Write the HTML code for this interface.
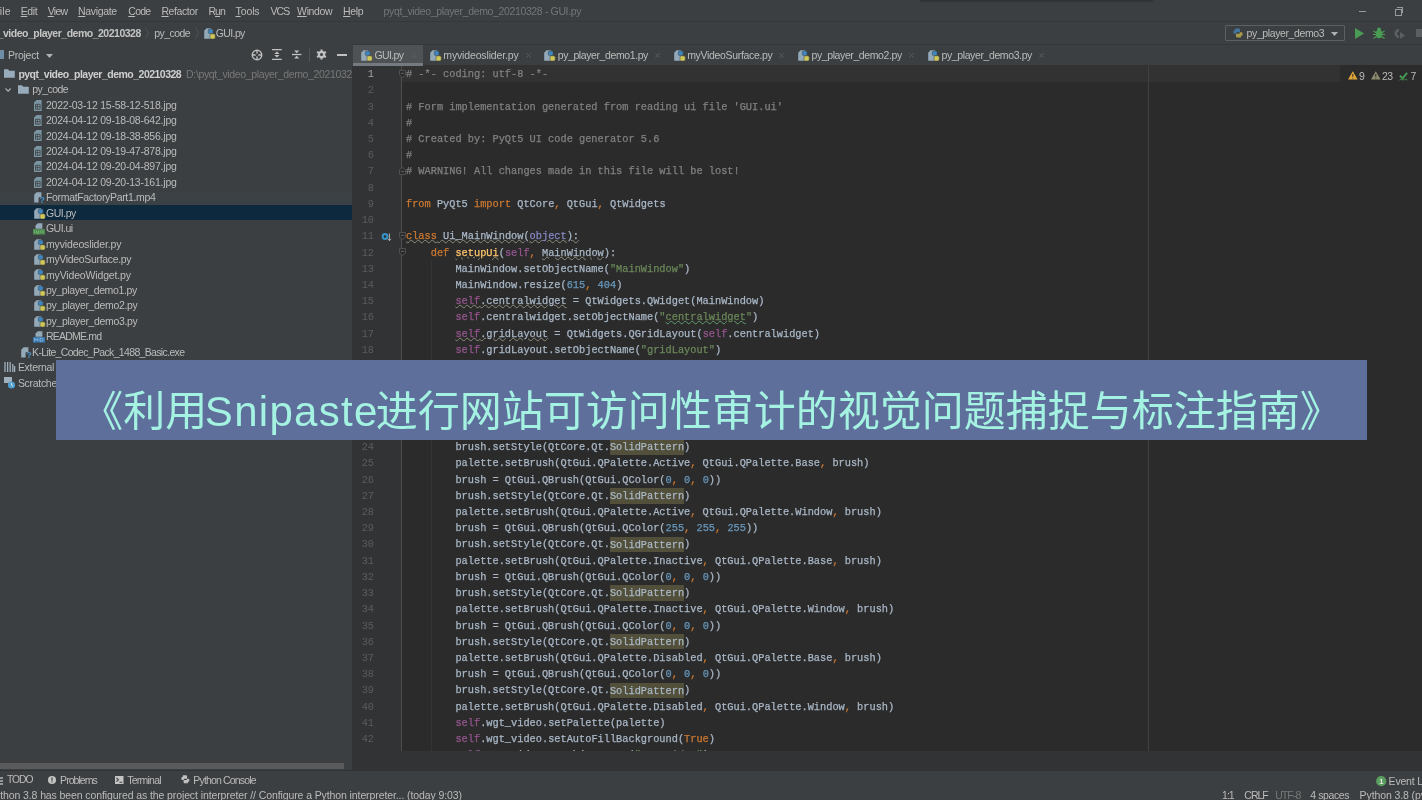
<!DOCTYPE html>
<html lang="zh"><head><meta charset="utf-8"><title>pyqt_video_player_demo_20210328 - GUI.py</title>
<style>
html,body{margin:0;padding:0}
body{width:1422px;height:800px;overflow:hidden;position:relative;background:#3c3f41;
 font-family:"Liberation Sans","Noto Sans CJK SC",sans-serif;font-size:10.5px;color:#bbbbbb}
#app{position:absolute;left:0;top:0;width:1422px;height:800px;will-change:transform}
.abs{position:absolute}
.t{position:absolute;white-space:pre;line-height:14px;height:14px}
#menubar{left:0;top:0;width:1422px;height:22px;background:#3c3f41}
#navbar{left:0;top:22px;width:1422px;height:22px;background:#3c3f41}
#left{left:0;top:44px;width:352px;height:726px;background:#3c3f41;overflow:hidden}
#tabs{left:352.5px;top:44px;width:1069.5px;height:21px;background:#3c3f41;border-top:1px solid #35373a;box-sizing:border-box;z-index:2}
#editor{left:353px;top:65px;width:1069px;height:686px;background:#2b2b2b;overflow:hidden}
#gutter{left:0;top:0;width:49px;height:686px;background:#313335;border-right:1px solid #4e4e4e;box-sizing:border-box}
#crumbs{left:353px;top:751px;width:1069px;height:19px;background:#313335}
#toolbar{left:0;top:770px;width:1422px;height:18px;background:#3c3f41;border-top:1px solid #323232;box-sizing:border-box}
#status{left:0;top:788px;width:1422px;height:12px;background:#3c3f41}
.code{position:absolute;left:53.0px;white-space:pre;font-family:"Liberation Mono",monospace;font-size:10.300px;
 line-height:16.22px;height:16.22px;color:#a9b7c6;-webkit-text-stroke:0.25px}
.ln{position:absolute;left:0;width:21px;text-align:right;font-family:"Liberation Mono",monospace;font-size:10.300px;
 line-height:16.22px;height:16.22px;color:#5a5d60}
.c{color:#808080} .k{color:#cc7832} .s{color:#6a8759} .n{color:#6897bb} .sf{color:#94558d}
.f{color:#ffc66d} .b{color:#8888c6} .hl{background:#52503a;padding:1.9px 0 1.7px}
.u{text-decoration:underline wavy #8d8d7a;text-decoration-thickness:0.5px;text-underline-offset:0.3px}
.ug{text-decoration:underline wavy #659c6b;text-decoration-thickness:0.5px;text-underline-offset:0.3px}
.row{position:absolute;left:0;width:352px;height:15.45px}
.m{text-decoration:underline;text-decoration-thickness:0.7px;text-underline-offset:1px}
#banner{left:56px;top:360px;width:1311px;height:79.5px;background:#5f6f9b}
#btext{position:absolute;left:0;top:11.5px;width:1311px;height:80px;line-height:80px;text-align:center;white-space:nowrap;
 font-family:"Liberation Sans","Noto Sans CJK SC",sans-serif;font-size:42px;color:#a4f2e1;letter-spacing:0}
#btext span{letter-spacing:1.3px;margin-left:-2.5px;margin-right:-3.1px}
svg{position:absolute;overflow:visible}
</style></head>
<body>
<div id="app">
<div id="menubar" class="abs"><span class="t" style="left:-6.9px;top:4.2px;font-size:10.5px;letter-spacing:0.19px;"><span class="m">F</span>ile</span><span class="t" style="left:20.7px;top:4.2px;font-size:10.5px;letter-spacing:-0.40px;"><span class="m">E</span>dit</span><span class="t" style="left:47.7px;top:4.2px;font-size:10.5px;letter-spacing:-0.69px;"><span class="m">V</span>iew</span><span class="t" style="left:78.1px;top:4.2px;font-size:10.5px;letter-spacing:-0.35px;"><span class="m">N</span>avigate</span><span class="t" style="left:128.3px;top:4.2px;font-size:10.5px;letter-spacing:-0.77px;"><span class="m">C</span>ode</span><span class="t" style="left:161.4px;top:4.2px;font-size:10.5px;letter-spacing:-0.40px;"><span class="m">R</span>efactor</span><span class="t" style="left:208.5px;top:4.2px;font-size:10.5px;letter-spacing:-1.00px;">R<span class="m">u</span>n</span><span class="t" style="left:235.5px;top:4.2px;font-size:10.5px;letter-spacing:-0.10px;"><span class="m">T</span>ools</span><span class="t" style="left:270.6px;top:4.2px;font-size:10.5px;letter-spacing:-1.00px;">VCS</span><span class="t" style="left:297.1px;top:4.2px;font-size:10.5px;letter-spacing:-0.37px;"><span class="m">W</span>indow</span><span class="t" style="left:343.1px;top:4.2px;font-size:10.5px;letter-spacing:-0.37px;"><span class="m">H</span>elp</span><span class="t" style="left:383.6px;top:4.2px;font-size:10.5px;color:#747678;letter-spacing:-0.36px;">pyqt_video_player_demo_20210328 - GUI.py</span><div class="abs" style="left:1359px;top:11px;width:7px;height:1px;background:#9a9a9a"></div><div class="abs" style="left:1395px;top:9px;width:5px;height:5px;border:1px solid #9a9a9a;box-sizing:content-box"></div><div class="abs" style="left:1397px;top:7px;width:5px;height:5px;border-top:1px solid #9a9a9a;border-right:1px solid #9a9a9a"></div><div class="abs" style="left:920px;top:0;width:233px;height:2.5px;background:linear-gradient(#2d2f31,#3c3f41);border-radius:0 0 2px 2px"></div></div>
<div id="navbar" class="abs"><div class="abs" style="left:0;top:-1px;width:1422px;height:1px;background:#35383a"></div><span class="t" style="left:-22.6px;top:3.9px;font-size:10.5px;color:#c4c4c4;font-weight:bold;letter-spacing:-0.49px;">pyqt_video_player_demo_20210328</span><svg style="left:145px;top:5px" width="4" height="12"><path d="M0.5 0.5l3 5.5-3 5.5" stroke="#505355" stroke-width="1" fill="none"/></svg><span class="t" style="left:154.2px;top:3.9px;font-size:10.5px;letter-spacing:-0.55px;">py_code</span><svg style="left:195px;top:5px" width="4" height="12"><path d="M0.5 0.5l3 5.5-3 5.5" stroke="#505355" stroke-width="1" fill="none"/></svg><svg style="left:203.5px;top:5.5px" width="12" height="12"><path d="M0.2 2.7L2.6 0.3H7.2V10.8H0.2z" fill="#93a9b8"/><rect x="4.3" y="1" width="4.8" height="4.6" rx="1.3" fill="#3d86c0" stroke="#3c3f41" stroke-width="0.5"/><rect x="6" y="5.8" width="5.2" height="5.2" rx="1.5" fill="#cfc75a" stroke="#3c3f41" stroke-width="0.5"/></svg><span class="t" style="left:215.8px;top:3.9px;font-size:10.5px;letter-spacing:-0.62px;">GUI.py</span><div class="abs" style="left:1225px;top:3px;width:120px;height:16px;border:1px solid #5e6060;box-sizing:border-box;border-radius:1px"></div><svg style="left:1232.5px;top:6px" width="10" height="10"><path d="M2.6 0.4h3q1.4 0 1.4 1.4v2.4H4.2q-1 0-1 1v0.6H1.6q-1.2 0-1.2-1.3V3.4q0-1.2 1.2-1.2h0.4V1.4q0-1 0.6-1z" fill="#42749b"/><path d="M7.4 9.6h-3q-1.4 0-1.4-1.4V5.8h2.8q1 0 1-1V4.2h1.6q1.2 0 1.2 1.3v1.1q0 1.2-1.2 1.2H8v0.8q0 1-0.6 1z" fill="#a89a4a"/></svg><span class="t" style="left:1246.6px;top:3.9px;font-size:10.5px;letter-spacing:-0.39px;">py_player_demo3</span><svg style="left:1331px;top:10px" width="8" height="5"><path d="M0 0h7l-3.5 4z" fill="#b0b0b0"/></svg><svg style="left:1355px;top:6px" width="9" height="11"><path d="M0 0l9 5.5-9 5.5z" fill="#499c54"/></svg><svg style="left:1373px;top:5px" width="12" height="12"><ellipse cx="6" cy="7" rx="3.2" ry="4.2" fill="#499c54"/><circle cx="6" cy="2.5" r="2" fill="#499c54"/><path d="M0.5 4l3 2M11.5 4l-3 2M0 7.5h3M12 7.5H9M0.5 11.5l3-2M11.5 11.5l-3-2" stroke="#499c54" stroke-width="1.2" fill="none"/></svg><svg style="left:1394px;top:6px" width="11" height="11"><path d="M5 1a4.5 4.5 0 1 0 0 9V7.5a2 2 0 1 1 0-4z" fill="#5c5f61"/><path d="M6 4l5 3.5L6 11z" fill="#5c5f61"/></svg><div class="abs" style="left:1416px;top:7px;width:8px;height:8px;background:#5c5f61"></div></div>
<div id="left" class="abs"><div class="abs" style="left:0;top:6px;width:4px;height:9px;background:#6e8ea8"></div><span class="t" style="left:7.9px;top:3.9px;font-size:10.5px;letter-spacing:-0.25px;">Project</span><svg style="left:45.5px;top:9.5px" width="8" height="5"><path d="M0 0h7l-3.5 4z" fill="#afb1b3"/></svg><svg style="left:250.5px;top:4.7px" width="12" height="12"><circle cx="6" cy="6" r="4.7" fill="none" stroke="#c0c0c0" stroke-width="1.5"/><path d="M6 1.5v3.2M6 7.3v3.2M1.5 6h3.2M7.3 6h3.2" stroke="#c0c0c0" stroke-width="1.3"/></svg><svg style="left:271.6px;top:5.2px" width="10" height="11"><path d="M0 .6h9.8M0 10.4h9.8" stroke="#c0c0c0" stroke-width="1.2"/><path d="M4.9 2.4l2.6 2.5h-5.2zM4.9 8.6l2.6-2.5h-5.2z" fill="#c0c0c0"/></svg><svg style="left:291.9px;top:5.2px" width="10" height="11"><path d="M0 5.5h9.4" stroke="#c0c0c0" stroke-width="1.3"/><path d="M4.7 4.2l2.6-2.8h-5.2zM4.7 6.8l2.6 2.8h-5.2z" fill="#c0c0c0"/></svg><div class="abs" style="left:309px;top:4px;width:1px;height:14px;background:#4f5153"></div><svg style="left:316.4px;top:5.2px" width="11" height="11"><circle cx="5.5" cy="5.5" r="2.7" fill="none" stroke="#c0c0c0" stroke-width="2.2"/><path d="M5.5 0.4v10.2M1.08 2.95l8.84 5.1M9.92 2.95l-8.84 5.1" stroke="#c0c0c0" stroke-width="2.1"/><circle cx="5.5" cy="5.5" r="1.5" fill="#3c3f41"/></svg><div class="abs" style="left:337px;top:9.8px;width:10.2px;height:2.1px;background:#c0c0c0"></div><div class="row" style="top:21.85px;"><svg style="left:4.1px;top:3.5px" width="11" height="9"><path d="M0 0.2h4l1.3 1.5H10.8V8.8H0z" fill="#98abba"/></svg><span class="t" style="left:18.4px;top:0.9px;font-size:10.5px;color:#cfcfcf;font-weight:bold;letter-spacing:-0.51px;">pyqt_video_player_demo_20210328</span><span class="t" style="left:186.1px;top:0.9px;font-size:10.5px;color:#787878;letter-spacing:-0.35px;">D:\pyqt_video_player_demo_20210328</span></div><div class="row" style="top:37.30px;"><svg style="left:5.3px;top:6.3px" width="6" height="4"><path d="M0.5 0.5l2.6 2.7L5.7 0.5" stroke="#afb1b3" stroke-width="1.1" fill="none"/></svg><svg style="left:18.2px;top:3.6px" width="11" height="9"><path d="M0 0.2h4l1.3 1.5H10.8V8.8H0z" fill="#98abba"/></svg><span class="t" style="left:32.3px;top:0.9px;font-size:10.5px;letter-spacing:-0.57px;">py_code</span></div><div class="row" style="top:52.75px;"><svg style="left:33.5px;top:2.8px" width="8" height="11"><path d="M0 2.6L2.6 0H7.6v11H0z" fill="#7b96a3"/><path d="M1.5 4.3h4.6v4.9H1.5z" fill="none" stroke="#3c3f41" stroke-width="0.8"/><path d="M1.5 6.6h4.6M3.4 4.3v4.9" stroke="#3c3f41" stroke-width="0.7"/></svg><span class="t" style="left:46.0px;top:0.9px;font-size:10.5px;letter-spacing:-0.22px;">2022-03-12 15-58-12-518.jpg</span></div><div class="row" style="top:68.20px;"><svg style="left:33.5px;top:2.8px" width="8" height="11"><path d="M0 2.6L2.6 0H7.6v11H0z" fill="#7b96a3"/><path d="M1.5 4.3h4.6v4.9H1.5z" fill="none" stroke="#3c3f41" stroke-width="0.8"/><path d="M1.5 6.6h4.6M3.4 4.3v4.9" stroke="#3c3f41" stroke-width="0.7"/></svg><span class="t" style="left:46.0px;top:0.9px;font-size:10.5px;letter-spacing:-0.22px;">2024-04-12 09-18-08-642.jpg</span></div><div class="row" style="top:83.65px;"><svg style="left:33.5px;top:2.8px" width="8" height="11"><path d="M0 2.6L2.6 0H7.6v11H0z" fill="#7b96a3"/><path d="M1.5 4.3h4.6v4.9H1.5z" fill="none" stroke="#3c3f41" stroke-width="0.8"/><path d="M1.5 6.6h4.6M3.4 4.3v4.9" stroke="#3c3f41" stroke-width="0.7"/></svg><span class="t" style="left:46.0px;top:0.9px;font-size:10.5px;letter-spacing:-0.22px;">2024-04-12 09-18-38-856.jpg</span></div><div class="row" style="top:99.10px;"><svg style="left:33.5px;top:2.8px" width="8" height="11"><path d="M0 2.6L2.6 0H7.6v11H0z" fill="#7b96a3"/><path d="M1.5 4.3h4.6v4.9H1.5z" fill="none" stroke="#3c3f41" stroke-width="0.8"/><path d="M1.5 6.6h4.6M3.4 4.3v4.9" stroke="#3c3f41" stroke-width="0.7"/></svg><span class="t" style="left:46.0px;top:0.9px;font-size:10.5px;letter-spacing:-0.22px;">2024-04-12 09-19-47-878.jpg</span></div><div class="row" style="top:114.55px;"><svg style="left:33.5px;top:2.8px" width="8" height="11"><path d="M0 2.6L2.6 0H7.6v11H0z" fill="#7b96a3"/><path d="M1.5 4.3h4.6v4.9H1.5z" fill="none" stroke="#3c3f41" stroke-width="0.8"/><path d="M1.5 6.6h4.6M3.4 4.3v4.9" stroke="#3c3f41" stroke-width="0.7"/></svg><span class="t" style="left:46.0px;top:0.9px;font-size:10.5px;letter-spacing:-0.22px;">2024-04-12 09-20-04-897.jpg</span></div><div class="row" style="top:130.00px;"><svg style="left:33.5px;top:2.8px" width="8" height="11"><path d="M0 2.6L2.6 0H7.6v11H0z" fill="#7b96a3"/><path d="M1.5 4.3h4.6v4.9H1.5z" fill="none" stroke="#3c3f41" stroke-width="0.8"/><path d="M1.5 6.6h4.6M3.4 4.3v4.9" stroke="#3c3f41" stroke-width="0.7"/></svg><span class="t" style="left:46.0px;top:0.9px;font-size:10.5px;letter-spacing:-0.22px;">2024-04-12 09-20-13-161.jpg</span></div><div class="abs" style="left:0;top:148.4px;width:352px;height:12.4px;background:rgba(60,85,105,0.10)"></div><div class="row" style="top:145.45px;"><svg style="left:33.5px;top:2.8px" width="12" height="12"><path d="M0.2 2.7L2.6 0.3H7.4v5H4.6v5.2H0.2z" fill="#93a9b8"/><text x="5.6" y="11.4" font-family="Liberation Sans,sans-serif" font-size="8.5" font-weight="bold" fill="#4a96cf">?</text></svg><span class="t" style="left:46.0px;top:0.9px;font-size:10.5px;letter-spacing:-0.33px;">FormatFactoryPart1.mp4</span></div><div class="row" style="top:160.90px;background:#0d293e;"><svg style="left:33.5px;top:2.8px" width="12" height="12"><path d="M0.2 2.7L2.6 0.3H7.2V10.8H0.2z" fill="#93a9b8"/><rect x="4.3" y="1" width="4.8" height="4.6" rx="1.3" fill="#3d86c0" stroke="#3c3f41" stroke-width="0.5"/><rect x="6" y="5.8" width="5.2" height="5.2" rx="1.5" fill="#cfc75a" stroke="#3c3f41" stroke-width="0.5"/></svg><span class="t" style="left:46.0px;top:0.9px;font-size:10.5px;letter-spacing:-0.46px;">GUI.py</span></div><div class="row" style="top:176.35px;"><svg style="left:32.5px;top:2.8px" width="12" height="12"><path d="M2.5 2.6L4.8 0.3H9.4v5.4H2.5z" fill="#93a9b8"/><rect x="0" y="6" width="12" height="5.6" fill="#4d8a4d"/><path d="M1.6 7.4v2.8M3.6 7.4v2.8h2v-2.8M8 7.4v2.8M10 7.4v2.8" stroke="#7fb87f" stroke-width="0.8" fill="none"/></svg><span class="t" style="left:46.0px;top:0.9px;font-size:10.5px;letter-spacing:-0.55px;">GUI.ui</span></div><div class="row" style="top:191.80px;"><svg style="left:33.5px;top:2.8px" width="12" height="12"><path d="M0.2 2.7L2.6 0.3H7.2V10.8H0.2z" fill="#93a9b8"/><rect x="4.3" y="1" width="4.8" height="4.6" rx="1.3" fill="#3d86c0" stroke="#3c3f41" stroke-width="0.5"/><rect x="6" y="5.8" width="5.2" height="5.2" rx="1.5" fill="#cfc75a" stroke="#3c3f41" stroke-width="0.5"/></svg><span class="t" style="left:46.0px;top:0.9px;font-size:10.5px;letter-spacing:-0.14px;">myvideoslider.py</span></div><div class="row" style="top:207.25px;"><svg style="left:33.5px;top:2.8px" width="12" height="12"><path d="M0.2 2.7L2.6 0.3H7.2V10.8H0.2z" fill="#93a9b8"/><rect x="4.3" y="1" width="4.8" height="4.6" rx="1.3" fill="#3d86c0" stroke="#3c3f41" stroke-width="0.5"/><rect x="6" y="5.8" width="5.2" height="5.2" rx="1.5" fill="#cfc75a" stroke="#3c3f41" stroke-width="0.5"/></svg><span class="t" style="left:46.0px;top:0.9px;font-size:10.5px;letter-spacing:-0.33px;">myVideoSurface.py</span></div><div class="row" style="top:222.70px;"><svg style="left:33.5px;top:2.8px" width="12" height="12"><path d="M0.2 2.7L2.6 0.3H7.2V10.8H0.2z" fill="#93a9b8"/><rect x="4.3" y="1" width="4.8" height="4.6" rx="1.3" fill="#3d86c0" stroke="#3c3f41" stroke-width="0.5"/><rect x="6" y="5.8" width="5.2" height="5.2" rx="1.5" fill="#cfc75a" stroke="#3c3f41" stroke-width="0.5"/></svg><span class="t" style="left:46.0px;top:0.9px;font-size:10.5px;letter-spacing:-0.16px;">myVideoWidget.py</span></div><div class="row" style="top:238.15px;"><svg style="left:33.5px;top:2.8px" width="12" height="12"><path d="M0.2 2.7L2.6 0.3H7.2V10.8H0.2z" fill="#93a9b8"/><rect x="4.3" y="1" width="4.8" height="4.6" rx="1.3" fill="#3d86c0" stroke="#3c3f41" stroke-width="0.5"/><rect x="6" y="5.8" width="5.2" height="5.2" rx="1.5" fill="#cfc75a" stroke="#3c3f41" stroke-width="0.5"/></svg><span class="t" style="left:46.0px;top:0.9px;font-size:10.5px;letter-spacing:-0.37px;">py_player_demo1.py</span></div><div class="row" style="top:253.60px;"><svg style="left:33.5px;top:2.8px" width="12" height="12"><path d="M0.2 2.7L2.6 0.3H7.2V10.8H0.2z" fill="#93a9b8"/><rect x="4.3" y="1" width="4.8" height="4.6" rx="1.3" fill="#3d86c0" stroke="#3c3f41" stroke-width="0.5"/><rect x="6" y="5.8" width="5.2" height="5.2" rx="1.5" fill="#cfc75a" stroke="#3c3f41" stroke-width="0.5"/></svg><span class="t" style="left:46.0px;top:0.9px;font-size:10.5px;letter-spacing:-0.33px;">py_player_demo2.py</span></div><div class="row" style="top:269.05px;"><svg style="left:33.5px;top:2.8px" width="12" height="12"><path d="M0.2 2.7L2.6 0.3H7.2V10.8H0.2z" fill="#93a9b8"/><rect x="4.3" y="1" width="4.8" height="4.6" rx="1.3" fill="#3d86c0" stroke="#3c3f41" stroke-width="0.5"/><rect x="6" y="5.8" width="5.2" height="5.2" rx="1.5" fill="#cfc75a" stroke="#3c3f41" stroke-width="0.5"/></svg><span class="t" style="left:46.0px;top:0.9px;font-size:10.5px;letter-spacing:-0.33px;">py_player_demo3.py</span></div><div class="row" style="top:284.50px;"><svg style="left:32.5px;top:2.8px" width="12" height="12"><path d="M2.5 2.6L4.8 0.3H9.4v5.4H2.5z" fill="#93a9b8"/><rect x="0" y="6" width="12" height="5.6" fill="#3b78ad"/><path d="M1.6 10.3V7.4l1.6 1.8 1.6-1.8v2.9M7 7.4v2.9h1.4q1.6 0 1.6-1.45T8.4 7.4z" stroke="#8fc0e8" stroke-width="0.8" fill="none"/></svg><span class="t" style="left:46.0px;top:0.9px;font-size:10.5px;letter-spacing:-0.79px;">README.md</span></div><div class="row" style="top:299.95px;"><svg style="left:20.5px;top:2.8px" width="12" height="12"><path d="M0.2 2.7L2.6 0.3H7.4v5H4.6v5.2H0.2z" fill="#93a9b8"/><text x="5.6" y="11.4" font-family="Liberation Sans,sans-serif" font-size="8.5" font-weight="bold" fill="#4a96cf">?</text></svg><span class="t" style="left:32.1px;top:0.9px;font-size:10.5px;letter-spacing:-0.66px;">K-Lite_Codec_Pack_1488_Basic.exe</span></div><div class="row" style="top:315.40px;"><svg style="left:4px;top:3px" width="11" height="10"><path d="M1 0v10M3.6 0v10M6.2 0v10M8.8 2v8M10.6 4v6" stroke="#9fb0bc" stroke-width="1.3"/></svg><span class="t" style="left:17.9px;top:0.9px;font-size:10.5px;letter-spacing:-0.3px;">External Libraries</span></div><div class="row" style="top:330.85px;"><svg style="left:4px;top:2px" width="12" height="12"><path d="M0 0h8v6H0z" fill="#9fb0bc"/><circle cx="7.5" cy="8" r="3.6" fill="#4f9fd0"/><path d="M7.5 6v2.2l1.6 1" stroke="#e8e8e8" stroke-width="0.9" fill="none"/></svg><span class="t" style="left:17.9px;top:0.9px;font-size:10.5px;letter-spacing:-0.3px;">Scratches and Consoles</span></div><div class="abs" style="left:0;top:719.2px;width:344px;height:6px;background:#595b5d"></div></div>
<div id="tabs" class="abs"><div class="abs" style="left:0;top:0;width:70.4px;height:20px;background:#4e5254"></div><div class="abs" style="left:0;top:18.4px;width:70.4px;height:2.4px;background:#747a80;z-index:3"></div><svg style="left:8.899999999999977px;top:4.5px" width="12" height="12"><path d="M0.2 2.7L2.6 0.3H7.2V10.8H0.2z" fill="#93a9b8"/><rect x="4.3" y="1" width="4.8" height="4.6" rx="1.3" fill="#3d86c0" stroke="#3c3f41" stroke-width="0.5"/><rect x="6" y="5.8" width="5.2" height="5.2" rx="1.5" fill="#cfc75a" stroke="#3c3f41" stroke-width="0.5"/></svg><span class="t" style="left:21.9px;top:3.0px;font-size:10.5px;letter-spacing:-0.62px;">GUI.py</span><svg style="left:58.8px;top:8px" width="5" height="5"><path d="M0.3 0.3l4.4 4.4M4.7 0.3l-4.4 4.4" stroke="#5c5f61" stroke-width="0.9"/></svg><svg style="left:77.19999999999999px;top:4.5px" width="12" height="12"><path d="M0.2 2.7L2.6 0.3H7.2V10.8H0.2z" fill="#93a9b8"/><rect x="4.3" y="1" width="4.8" height="4.6" rx="1.3" fill="#3d86c0" stroke="#3c3f41" stroke-width="0.5"/><rect x="6" y="5.8" width="5.2" height="5.2" rx="1.5" fill="#cfc75a" stroke="#3c3f41" stroke-width="0.5"/></svg><span class="t" style="left:90.8px;top:3.0px;font-size:10.5px;letter-spacing:-0.15px;">myvideoslider.py</span><svg style="left:173.5px;top:8px" width="5" height="5"><path d="M0.3 0.3l4.4 4.4M4.7 0.3l-4.4 4.4" stroke="#5c5f61" stroke-width="0.9"/></svg><svg style="left:191.89999999999998px;top:4.5px" width="12" height="12"><path d="M0.2 2.7L2.6 0.3H7.2V10.8H0.2z" fill="#93a9b8"/><rect x="4.3" y="1" width="4.8" height="4.6" rx="1.3" fill="#3d86c0" stroke="#3c3f41" stroke-width="0.5"/><rect x="6" y="5.8" width="5.2" height="5.2" rx="1.5" fill="#cfc75a" stroke="#3c3f41" stroke-width="0.5"/></svg><span class="t" style="left:205.2px;top:3.0px;font-size:10.5px;letter-spacing:-0.40px;">py_player_demo1.py</span><svg style="left:302.0px;top:8px" width="5" height="5"><path d="M0.3 0.3l4.4 4.4M4.7 0.3l-4.4 4.4" stroke="#5c5f61" stroke-width="0.9"/></svg><svg style="left:321.79999999999995px;top:4.5px" width="12" height="12"><path d="M0.2 2.7L2.6 0.3H7.2V10.8H0.2z" fill="#93a9b8"/><rect x="4.3" y="1" width="4.8" height="4.6" rx="1.3" fill="#3d86c0" stroke="#3c3f41" stroke-width="0.5"/><rect x="6" y="5.8" width="5.2" height="5.2" rx="1.5" fill="#cfc75a" stroke="#3c3f41" stroke-width="0.5"/></svg><span class="t" style="left:334.7px;top:3.0px;font-size:10.5px;letter-spacing:-0.33px;">myVideoSurface.py</span><svg style="left:426.5px;top:8px" width="5" height="5"><path d="M0.3 0.3l4.4 4.4M4.7 0.3l-4.4 4.4" stroke="#5c5f61" stroke-width="0.9"/></svg><svg style="left:445.29999999999995px;top:4.5px" width="12" height="12"><path d="M0.2 2.7L2.6 0.3H7.2V10.8H0.2z" fill="#93a9b8"/><rect x="4.3" y="1" width="4.8" height="4.6" rx="1.3" fill="#3d86c0" stroke="#3c3f41" stroke-width="0.5"/><rect x="6" y="5.8" width="5.2" height="5.2" rx="1.5" fill="#cfc75a" stroke="#3c3f41" stroke-width="0.5"/></svg><span class="t" style="left:459.0px;top:3.0px;font-size:10.5px;letter-spacing:-0.40px;">py_player_demo2.py</span><svg style="left:556.2px;top:8px" width="5" height="5"><path d="M0.3 0.3l4.4 4.4M4.7 0.3l-4.4 4.4" stroke="#5c5f61" stroke-width="0.9"/></svg><svg style="left:575.0px;top:4.5px" width="12" height="12"><path d="M0.2 2.7L2.6 0.3H7.2V10.8H0.2z" fill="#93a9b8"/><rect x="4.3" y="1" width="4.8" height="4.6" rx="1.3" fill="#3d86c0" stroke="#3c3f41" stroke-width="0.5"/><rect x="6" y="5.8" width="5.2" height="5.2" rx="1.5" fill="#cfc75a" stroke="#3c3f41" stroke-width="0.5"/></svg><span class="t" style="left:589.0px;top:3.0px;font-size:10.5px;letter-spacing:-0.39px;">py_player_demo3.py</span><svg style="left:686.2px;top:8px" width="5" height="5"><path d="M0.3 0.3l4.4 4.4M4.7 0.3l-4.4 4.4" stroke="#5c5f61" stroke-width="0.9"/></svg></div>
<div class="abs" style="left:352px;top:65.5px;width:1px;height:704px;background:#303234"></div><div id="editor" class="abs"><div class="abs" style="left:0;top:0;width:987px;height:16.6px;background:#323232"></div><div id="gutter" class="abs"></div><div class="abs" style="left:794.5px;top:0;width:1px;height:686px;background:#414141"></div><div class="abs" style="left:77.7px;top:195.0px;width:1px;height:491.4px;background:#343434"></div><div class="ln" style="top:1.10px;color:#a4a3a3">1</div><div class="code" style="top:1.10px"><span class="c"># -*- coding: utf-8 -*-</span></div>
<div class="ln" style="top:17.32px">2</div>
<div class="ln" style="top:33.54px">3</div><div class="code" style="top:33.54px"><span class="c"># Form implementation generated from reading ui file 'GUI.ui'</span></div>
<div class="ln" style="top:49.76px">4</div><div class="code" style="top:49.76px"><span class="c">#</span></div>
<div class="ln" style="top:65.98px">5</div><div class="code" style="top:65.98px"><span class="c"># Created by: PyQt5 UI code generator 5.6</span></div>
<div class="ln" style="top:82.20px">6</div><div class="code" style="top:82.20px"><span class="c">#</span></div>
<div class="ln" style="top:98.42px">7</div><div class="code" style="top:98.42px"><span class="c"># WARNING! All changes made in this file will be lost!</span></div>
<div class="ln" style="top:114.64px">8</div>
<div class="ln" style="top:130.86px">9</div><div class="code" style="top:130.86px"><span class="k">from</span> PyQt5 <span class="k">import</span> QtCore<span class="k">,</span> QtGui<span class="k">,</span> QtWidgets</div>
<div class="ln" style="top:147.08px">10</div>
<div class="ln" style="top:163.30px">11</div><div class="code" style="top:163.30px"><span class="k u">class</span><span class="u"> Ui_MainWindow(</span><span class="b u">object</span><span class="u">):</span></div>
<div class="ln" style="top:179.52px">12</div><div class="code" style="top:179.52px"><span class="k">    def </span><span class="f u">setupUi</span>(<span class="sf">self</span><span class="k">,</span> <span class="u">MainWindow</span>):</div>
<div class="ln" style="top:195.74px">13</div><div class="code" style="top:195.74px">        MainWindow.setObjectName(<span class="s">"MainWindow"</span>)</div>
<div class="ln" style="top:211.96px">14</div><div class="code" style="top:211.96px">        MainWindow.resize(<span class="n">615</span><span class="k">,</span> <span class="n">404</span>)</div>
<div class="ln" style="top:228.18px">15</div><div class="code" style="top:228.18px">        <span class="sf u">self</span><span class="u">.centralwidget</span> = QtWidgets.QWidget(MainWindow)</div>
<div class="ln" style="top:244.40px">16</div><div class="code" style="top:244.40px">        <span class="sf">self</span>.centralwidget.setObjectName(<span class="s">"</span><span class="s ug">centralwidget</span><span class="s">"</span>)</div>
<div class="ln" style="top:260.62px">17</div><div class="code" style="top:260.62px">        <span class="sf u">self</span><span class="u">.gridLayout</span> = QtWidgets.QGridLayout(<span class="sf">self</span>.centralwidget)</div>
<div class="ln" style="top:276.84px">18</div><div class="code" style="top:276.84px">        <span class="sf">self</span>.gridLayout.setObjectName(<span class="s">"gridLayout"</span>)</div>
<div class="ln" style="top:293.06px">19</div><div class="code" style="top:293.06px">        <span class="sf">self</span>.wgt_video = myVideoWidget(<span class="sf">self</span>.centralwidget)</div>
<div class="ln" style="top:309.28px">20</div><div class="code" style="top:309.28px">        <span class="sf">self</span>.wgt_video.setMinimumSize(QtCore.QSize(<span class="n">410</span><span class="k">,</span> <span class="n">200</span>))</div>
<div class="ln" style="top:325.50px">21</div><div class="code" style="top:325.50px">        palette = QtGui.QPalette()</div>
<div class="ln" style="top:341.72px">22</div><div class="code" style="top:341.72px">        brush = QtGui.QBrush(QtGui.QColor(<span class="n">255</span><span class="k">,</span> <span class="n">255</span><span class="k">,</span> <span class="n">255</span>))</div>
<div class="ln" style="top:357.94px">23</div><div class="code" style="top:357.94px">        brush.setStyle(QtCore.Qt.<span class="hl">SolidPattern</span>)</div>
<div class="ln" style="top:374.16px">24</div><div class="code" style="top:374.16px">        brush.setStyle(QtCore.Qt.<span class="hl">SolidPattern</span>)</div>
<div class="ln" style="top:390.38px">25</div><div class="code" style="top:390.38px">        palette.setBrush(QtGui.QPalette.Active<span class="k">,</span> QtGui.QPalette.Base<span class="k">,</span> brush)</div>
<div class="ln" style="top:406.60px">26</div><div class="code" style="top:406.60px">        brush = QtGui.QBrush(QtGui.QColor(<span class="n">0</span><span class="k">,</span> <span class="n">0</span><span class="k">,</span> <span class="n">0</span>))</div>
<div class="ln" style="top:422.82px">27</div><div class="code" style="top:422.82px">        brush.setStyle(QtCore.Qt.<span class="hl">SolidPattern</span>)</div>
<div class="ln" style="top:439.04px">28</div><div class="code" style="top:439.04px">        palette.setBrush(QtGui.QPalette.Active<span class="k">,</span> QtGui.QPalette.Window<span class="k">,</span> brush)</div>
<div class="ln" style="top:455.26px">29</div><div class="code" style="top:455.26px">        brush = QtGui.QBrush(QtGui.QColor(<span class="n">255</span><span class="k">,</span> <span class="n">255</span><span class="k">,</span> <span class="n">255</span>))</div>
<div class="ln" style="top:471.48px">30</div><div class="code" style="top:471.48px">        brush.setStyle(QtCore.Qt.<span class="hl">SolidPattern</span>)</div>
<div class="ln" style="top:487.70px">31</div><div class="code" style="top:487.70px">        palette.setBrush(QtGui.QPalette.Inactive<span class="k">,</span> QtGui.QPalette.Base<span class="k">,</span> brush)</div>
<div class="ln" style="top:503.92px">32</div><div class="code" style="top:503.92px">        brush = QtGui.QBrush(QtGui.QColor(<span class="n">0</span><span class="k">,</span> <span class="n">0</span><span class="k">,</span> <span class="n">0</span>))</div>
<div class="ln" style="top:520.14px">33</div><div class="code" style="top:520.14px">        brush.setStyle(QtCore.Qt.<span class="hl">SolidPattern</span>)</div>
<div class="ln" style="top:536.36px">34</div><div class="code" style="top:536.36px">        palette.setBrush(QtGui.QPalette.Inactive<span class="k">,</span> QtGui.QPalette.Window<span class="k">,</span> brush)</div>
<div class="ln" style="top:552.58px">35</div><div class="code" style="top:552.58px">        brush = QtGui.QBrush(QtGui.QColor(<span class="n">0</span><span class="k">,</span> <span class="n">0</span><span class="k">,</span> <span class="n">0</span>))</div>
<div class="ln" style="top:568.80px">36</div><div class="code" style="top:568.80px">        brush.setStyle(QtCore.Qt.<span class="hl">SolidPattern</span>)</div>
<div class="ln" style="top:585.02px">37</div><div class="code" style="top:585.02px">        palette.setBrush(QtGui.QPalette.Disabled<span class="k">,</span> QtGui.QPalette.Base<span class="k">,</span> brush)</div>
<div class="ln" style="top:601.24px">38</div><div class="code" style="top:601.24px">        brush = QtGui.QBrush(QtGui.QColor(<span class="n">0</span><span class="k">,</span> <span class="n">0</span><span class="k">,</span> <span class="n">0</span>))</div>
<div class="ln" style="top:617.46px">39</div><div class="code" style="top:617.46px">        brush.setStyle(QtCore.Qt.<span class="hl">SolidPattern</span>)</div>
<div class="ln" style="top:633.68px">40</div><div class="code" style="top:633.68px">        palette.setBrush(QtGui.QPalette.Disabled<span class="k">,</span> QtGui.QPalette.Window<span class="k">,</span> brush)</div>
<div class="ln" style="top:649.90px">41</div><div class="code" style="top:649.90px">        <span class="sf">self</span>.wgt_video.setPalette(palette)</div>
<div class="ln" style="top:666.12px">42</div><div class="code" style="top:666.12px">        <span class="sf">self</span>.wgt_video.setAutoFillBackground(<span class="k">True</span>)</div>
<div class="ln" style="top:682.34px">43</div><div class="code" style="top:682.34px">        <span class="sf">self</span>.wgt_video.setObjectName(<span class="s">"wgt_video"</span>)</div>
<svg style="left:45.5px;top:4.6px" width="7" height="8"><path d="M0.5 0.5h6v4.6l-3 2.4-3-2.4z" fill="#2b2b2b" stroke="#55585a" stroke-width="0.8"/><path d="M1.8 3.4h3.4" stroke="#6c6f71" stroke-width="0.8"/></svg><svg style="left:45.5px;top:101.9px" width="7" height="8"><path d="M0.5 7.5h6V2.9l-3-2.4-3 2.4z" fill="#2b2b2b" stroke="#55585a" stroke-width="0.8"/><path d="M1.8 4.6h3.4" stroke="#6c6f71" stroke-width="0.8"/></svg><svg style="left:45.5px;top:166.8px" width="7" height="8"><path d="M0.5 0.5h6v4.6l-3 2.4-3-2.4z" fill="#2b2b2b" stroke="#55585a" stroke-width="0.8"/><path d="M1.8 3.4h3.4" stroke="#6c6f71" stroke-width="0.8"/></svg><svg style="left:45.5px;top:183.0px" width="7" height="8"><path d="M0.5 0.5h6v4.6l-3 2.4-3-2.4z" fill="#2b2b2b" stroke="#55585a" stroke-width="0.8"/><path d="M1.8 3.4h3.4" stroke="#6c6f71" stroke-width="0.8"/></svg><svg style="left:28px;top:166.9px" width="10" height="10"><circle cx="4" cy="4.5" r="3.4" fill="#3592c4"/><circle cx="4" cy="4.5" r="1.3" fill="#2b2b2b"/><path d="M8.4 1.5v7M6.8 6.8l1.6 1.9 1.6-1.9" stroke="#afb1b3" stroke-width="1" fill="none"/></svg><svg style="left:994.6px;top:6.2px" width="9.6" height="8.8" viewBox="0 0 10 10" preserveAspectRatio="none"><path d="M5 0.3L10 9.6H0z" fill="#e2a53a"/><path d="M5 3.4v3.2M5 7.6v1" stroke="#2b2b2b" stroke-width="1.1"/></svg><span class="t" style="left:1006.1px;top:3.8px;font-size:10.5px;letter-spacing:0px;">9</span><svg style="left:1017.8px;top:6.2px" width="9.6" height="8.8" viewBox="0 0 10 10" preserveAspectRatio="none"><path d="M5 0.3L10 9.6H0z" fill="#8d8a6d"/><path d="M5 3.4v3.2M5 7.6v1" stroke="#2b2b2b" stroke-width="1.1"/></svg><span class="t" style="left:1029.1px;top:3.8px;font-size:10.5px;letter-spacing:-0.69px;">23</span><svg style="left:1046.3px;top:6.5px" width="9" height="9" viewBox="0 0 10 10"><path d="M1 4l3 3 5-6" stroke="#499c54" stroke-width="2.1" fill="none"/><path d="M0.5 9l1.5-1 1.5 1 1.5-1 1.5 1 1.5-1 1.5 1" stroke="#499c54" stroke-width="0.9" fill="none"/></svg><span class="t" style="left:1057.6px;top:3.8px;font-size:10.5px;letter-spacing:0px;">7</span></div>
<div id="crumbs" class="abs"></div><div id="toolbar" class="abs"><svg style="left:-4.5px;top:5.5px" width="8" height="8"><path d="M0 1h7M0 4h7M0 7h7" stroke="#afb1b3" stroke-width="1.3"/></svg><span class="t" style="left:7.0px;top:2.4px;font-size:10.3px;letter-spacing:-1.00px;">TODO</span><svg style="left:48px;top:5px" width="8" height="8"><circle cx="4" cy="4" r="4" fill="#c4c4c4"/><path d="M4 1.6v3.1M4 5.6v1" stroke="#3c3f41" stroke-width="1.2"/></svg><span class="t" style="left:60.1px;top:2.3px;font-size:10.5px;letter-spacing:-0.97px;">Problems</span><svg style="left:115px;top:5px" width="8.5" height="8"><rect width="8.5" height="8" fill="#c4c4c4"/><path d="M1.5 1.8l1.9 1.9-1.9 1.9M4.4 6.2h2.8" stroke="#3c3f41" stroke-width="1.1" fill="none"/></svg><span class="t" style="left:127.2px;top:2.3px;font-size:10.5px;letter-spacing:-0.76px;">Terminal</span><svg style="left:180.6px;top:4.3px" width="10" height="10" viewBox="0 0 11.5 11.5"><path d="M2.6 0.4h3q1.4 0 1.4 1.4v2.4H4.2q-1 0-1 1v0.6H1.6q-1.2 0-1.2-1.3V3.4q0-1.2 1.2-1.2h0.4V1.4q0-1 0.6-1z" fill="#c0c0c0"/><path d="M7.4 9.6h-3q-1.4 0-1.4-1.4V5.8h2.8q1 0 1-1V4.2h1.6q1.2 0 1.2 1.3v1.1q0 1.2-1.2 1.2H8v0.8q0 1-0.6 1z" fill="#c0c0c0"/></svg><span class="t" style="left:193.3px;top:2.3px;font-size:10.5px;letter-spacing:-0.83px;">Python Console</span><svg style="left:1375.7px;top:4.5px" width="10.4" height="10.4"><circle cx="5.2" cy="5.2" r="5.1" fill="#5a9e5f"/><text x="3.3" y="8.1" font-family="Liberation Sans,sans-serif" font-size="7.5" font-weight="bold" fill="#e8e8e8">1</text></svg><span class="t" style="left:1388.6px;top:2.5px;font-size:10.5px;letter-spacing:-0.2px;">Event Log</span></div>
<div id="status" class="abs"><span class="t" style="left:-11.9px;top:-0.2px;font-size:10.5px;letter-spacing:-0.10px;">Python 3.8 has been configured as the project interpreter // Configure a Python interpreter... (today 9:03)</span><span class="t" style="left:1222.1px;top:-0.2px;font-size:10.5px;letter-spacing:-1.00px;">1:1</span><span class="t" style="left:1244.3px;top:-0.2px;font-size:10.5px;letter-spacing:-1.00px;">CRLF</span><span class="t" style="left:1275.2px;top:-0.2px;font-size:10.5px;color:#777777;letter-spacing:-0.91px;">UTF-8</span><span class="t" style="left:1310.3px;top:-0.2px;font-size:10.5px;letter-spacing:-0.42px;">4 spaces</span><span class="t" style="left:1359.6px;top:-0.2px;font-size:10.5px;letter-spacing:-0.1px;">Python 3.8 (pyqt_video_player_demo_20210328)</span></div>
<div id="banner" class="abs"><div id="btext">《利用<span>Snipaste</span>进行网站可访问性审计的视觉问题捕捉与标注指南》</div></div>
</div>
</body></html>
